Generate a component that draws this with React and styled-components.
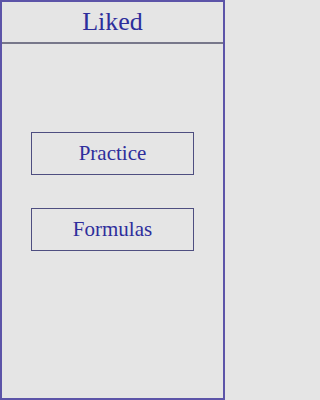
import styled, { createGlobalStyle } from 'styled-components';

const Global = createGlobalStyle`
  html, body {
    margin: 0;
    padding: 0;
    background: #e5e5e5;
  }
  * {
    box-sizing: border-box;
  }
`;

const Screen = styled.div`
  width: 225px;
  height: 400px;
  display: flex;
  flex-direction: column;
  border: 2px solid #5c54a8;
  background: #e5e5e5;
  font-family: 'Liberation Serif', 'Times New Roman', serif;
  color: #2e2e9c;
`;

const Header = styled.div`
  height: 42px;
  display: flex;
  align-items: center;
  justify-content: center;
  font-size: 26px;
  border-bottom: 2px solid #77778a;
`;

const Content = styled.div`
  flex: 1;
  display: flex;
  flex-direction: column;
  gap: 33px;
  padding: 88px 29px 0;
`;

const MenuButton = styled.button`
  height: 43px;
  width: 100%;
  border: 1px solid #4e4e80;
  background: transparent;
  font-family: inherit;
  font-size: 21px;
  color: inherit;
  cursor: pointer;
`;

export default function App() {
  return (
    <>
      <Global />
      <Screen>
        <Header>Liked</Header>
        <Content>
          <MenuButton>Practice</MenuButton>
          <MenuButton>Formulas</MenuButton>
        </Content>
      </Screen>
    </>
  );
}
